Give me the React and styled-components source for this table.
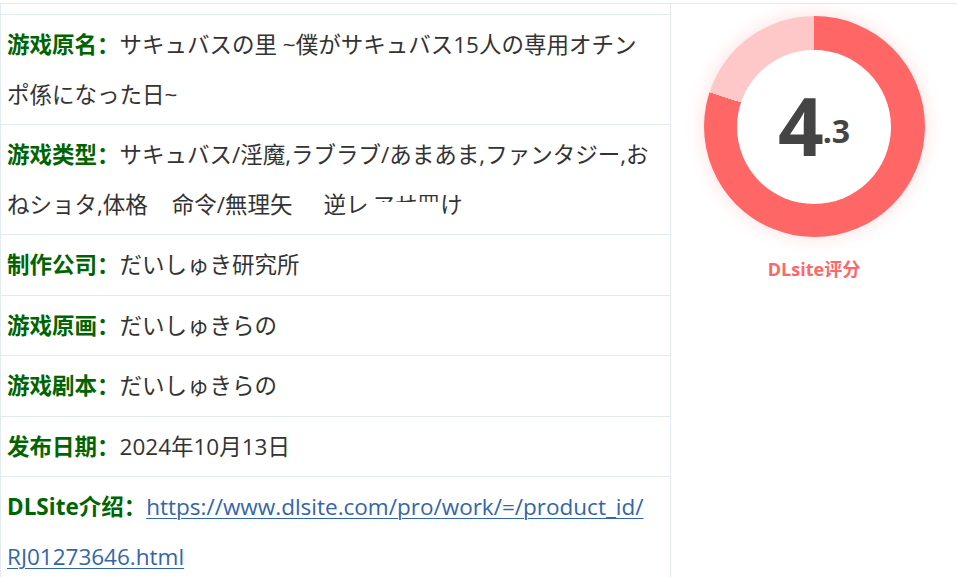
import React from "react"
import styled, { createGlobalStyle } from "styled-components"

const GlobalStyle = createGlobalStyle`
  html, body {
    margin: 0;
    padding: 0;
    background: #fff;
  }
  body {
    font-family: "Open Sans", "Noto Sans CJK SC", "Noto Sans CJK JP", sans-serif;
  }
`

const Table = styled.div`
  margin-top: 3px;
  display: grid;
  grid-template-columns: 669px 1fr;
  border-top: 1px solid #e3ebf2;
  border-left: 1px solid #e3ebf2;
`

const InfoColumn = styled.div`
  display: flex;
  flex-direction: column;
`

const SpacerRow = styled.div`
  height: 10px;
  border-bottom: 1px solid #e3ebf2;
`

const Row = styled.div`
  padding: 5px 13px 5px 6px;
  font-size: 22.5px;
  line-height: 49.5px;
  color: #333;
  border-bottom: 1px solid #e3ebf2;
  overflow-wrap: anywhere;
`

const Label = styled.b`
  color: #006400;
  font-weight: 700;
`

const Link = styled.a`
  color: #3366a8;
  text-decoration: underline;
  text-underline-offset: 3px;
  text-decoration-thickness: 1px;
`

const Redact = styled.span`
  display: inline-block;
  width: ${p => p.w}px;
`

const Smudge = styled.span`
  position: relative;
  &::after {
    content: "";
    position: absolute;
    left: -2px;
    right: -2px;
    bottom: 0;
    height: 58%;
    background: #fff;
  }
`

const ScorePanel = styled.div`
  border-left: 1px solid #e3ebf2;
  display: flex;
  flex-direction: column;
  align-items: center;
  padding-top: 12px;
`

const Donut = styled.div`
  width: 221px;
  height: 221px;
  border-radius: 50%;
  background: conic-gradient(#ff6666 0 ${p => p.pct}%, #ffc8c8 ${p => p.pct}% 100%);
  box-shadow: 0 0 18px rgba(255, 102, 102, 0.22);
  display: flex;
  align-items: center;
  justify-content: center;
`

const Hole = styled.div`
  width: 154px;
  height: 154px;
  border-radius: 50%;
  background: #fff;
  display: flex;
  align-items: center;
  justify-content: center;
  color: #444;
  font-family: "Open Sans", "Noto Sans", sans-serif;
  font-weight: 700;
`

const Score = styled.div`
  line-height: 1;
  white-space: nowrap;
  margin-top: -4px;
`

const BigDigit = styled.span`
  font-size: 80px;
  letter-spacing: -1px;
`

const SmallDigit = styled.span`
  font-size: 32px;
  vertical-align: 13px;
`

const ScoreLabel = styled.div`
  margin-top: 18px;
  color: #ff6666;
  font-size: 18px;
  font-weight: 700;
`

const rows = [
  { label: "制作公司", value: "だいしゅき研究所" },
  { label: "游戏原画", value: "だいしゅきらの" },
  { label: "游戏剧本", value: "だいしゅきらの" },
  { label: "发布日期", value: "2024年10月13日" },
]

const url = "https://www.dlsite.com/pro/work/=/product_id/RJ01273646.html"

export default function App() {
  return (
    <>
      <GlobalStyle />
      <Table>
        <InfoColumn>
          <SpacerRow />
          <Row>
            <Label>游戏原名：</Label>サキュバスの里 ~僕がサキュバス15人の専用オチンポ係になった日~
          </Row>
          <Row>
            <Label>游戏类型：</Label>サキュバス/淫魔,ラブラブ/あまあま,ファンタジー,おねショタ,体格<Redact w={24} />命令/無理矢<Redact w={31} />逆レ<Redact w={4} /><Smudge>ヱせ罒</Smudge>け
          </Row>
          {rows.map(r => (
            <Row key={r.label}>
              <Label>{r.label}：</Label>{r.value}
            </Row>
          ))}
          <Row>
            <Label>DLSite介绍：</Label>
            <Link href={url}>https://www.dlsite.com/pro/work/=/product_id/<wbr />RJ01273646.html</Link>
          </Row>
        </InfoColumn>
        <ScorePanel>
          <Donut pct={80}>
            <Hole>
              <Score>
                <BigDigit>4</BigDigit>
                <SmallDigit>.3</SmallDigit>
              </Score>
            </Hole>
          </Donut>
          <ScoreLabel>DLsite评分</ScoreLabel>
        </ScorePanel>
      </Table>
    </>
  )
}
